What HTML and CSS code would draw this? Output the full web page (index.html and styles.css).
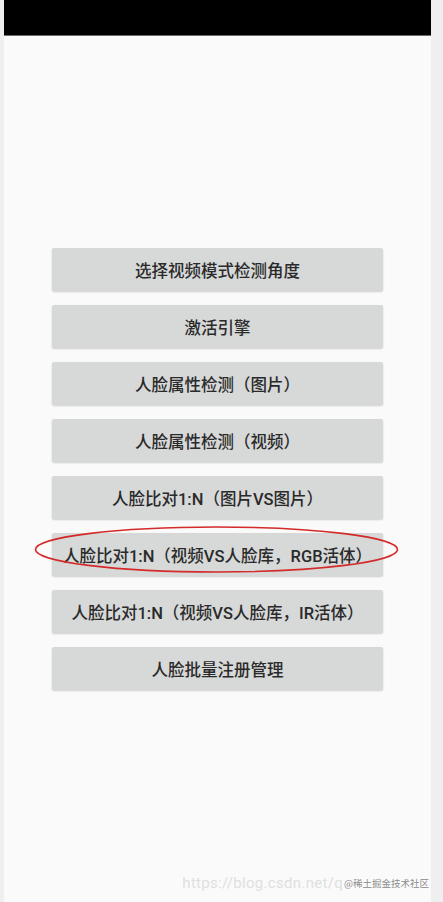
FILE: index.html
```html
<!DOCTYPE html>
<html lang="zh">
<head>
<meta charset="utf-8">
<link rel="stylesheet" href="styles.css">
</head>
<body>
<div class="frame">
  <div class="statusbar"></div>
  <div class="buttons">
    <div class="btn">选择视频模式检测角度</div>
    <div class="btn">激活引擎</div>
    <div class="btn">人脸属性检测（图片）</div>
    <div class="btn">人脸属性检测（视频）</div>
    <div class="btn">人脸比对1:N（图片VS图片）</div>
    <div class="btn">人脸比对1:N（视频VS人脸库，RGB活体）</div>
    <div class="btn">人脸比对1:N（视频VS人脸库，IR活体）</div>
    <div class="btn">人脸批量注册管理</div>
  </div>
  <div class="watermark">
    <span class="url">https://blog.csdn.net/q</span>
    <span class="brand">@稀土掘金技术社区</span>
  </div>
</div>
<svg class="circle" width="443" height="902" viewBox="0 0 443 902">
  <ellipse cx="216.5" cy="549.5" rx="181" ry="22.5" fill="none" stroke="#d42a2a" stroke-width="1.6"/>
</svg>
</body>
</html>
```
FILE: styles.css
```css
html, body {
  margin: 0;
  padding: 0;
}
body {
  width: 443px;
  height: 902px;
  background: #efefef;
  position: relative;
  overflow: hidden;
  font-family: "Roboto", "Noto Sans CJK SC", sans-serif;
}
.frame {
  margin-left: 4px;
  width: 427px;
  height: 902px;
  background: #fafafa;
  display: flex;
  flex-direction: column;
}
.statusbar {
  height: 35px;
  background: #000;
  border-bottom: 1px solid #6a6a6a;
  flex: none;
}
.buttons {
  padding-top: 212px;
  display: flex;
  flex-direction: column;
  align-items: center;
  gap: 14px;
}
.btn {
  width: 331px;
  height: 43px;
  box-sizing: border-box;
  background: #d7d8d8;
  border-radius: 2px;
  box-shadow: 0 1px 2px rgba(0,0,0,0.18);
  display: flex;
  align-items: center;
  justify-content: center;
  font-size: 16.5px;
  font-weight: 500;
  color: #2a2a2a;
  white-space: nowrap;
}
.watermark {
  margin-top: auto;
  height: 38px;
  display: flex;
  align-items: center;
  justify-content: flex-end;
  padding-right: 2px;
  padding-bottom: 0;
}
.url {
  font-family: "Roboto", sans-serif;
  font-size: 15px;
  color: #e0e0e0;
  letter-spacing: 0.3px;
}
.brand {
  font-family: "Noto Sans CJK SC", sans-serif;
  font-size: 9.5px;
  color: #8a8a8a;
  margin-left: 1px;
  text-shadow: 0 0 2px #fff;
}
.circle {
  position: absolute;
  left: 0;
  top: 0;
  pointer-events: none;
}
```
